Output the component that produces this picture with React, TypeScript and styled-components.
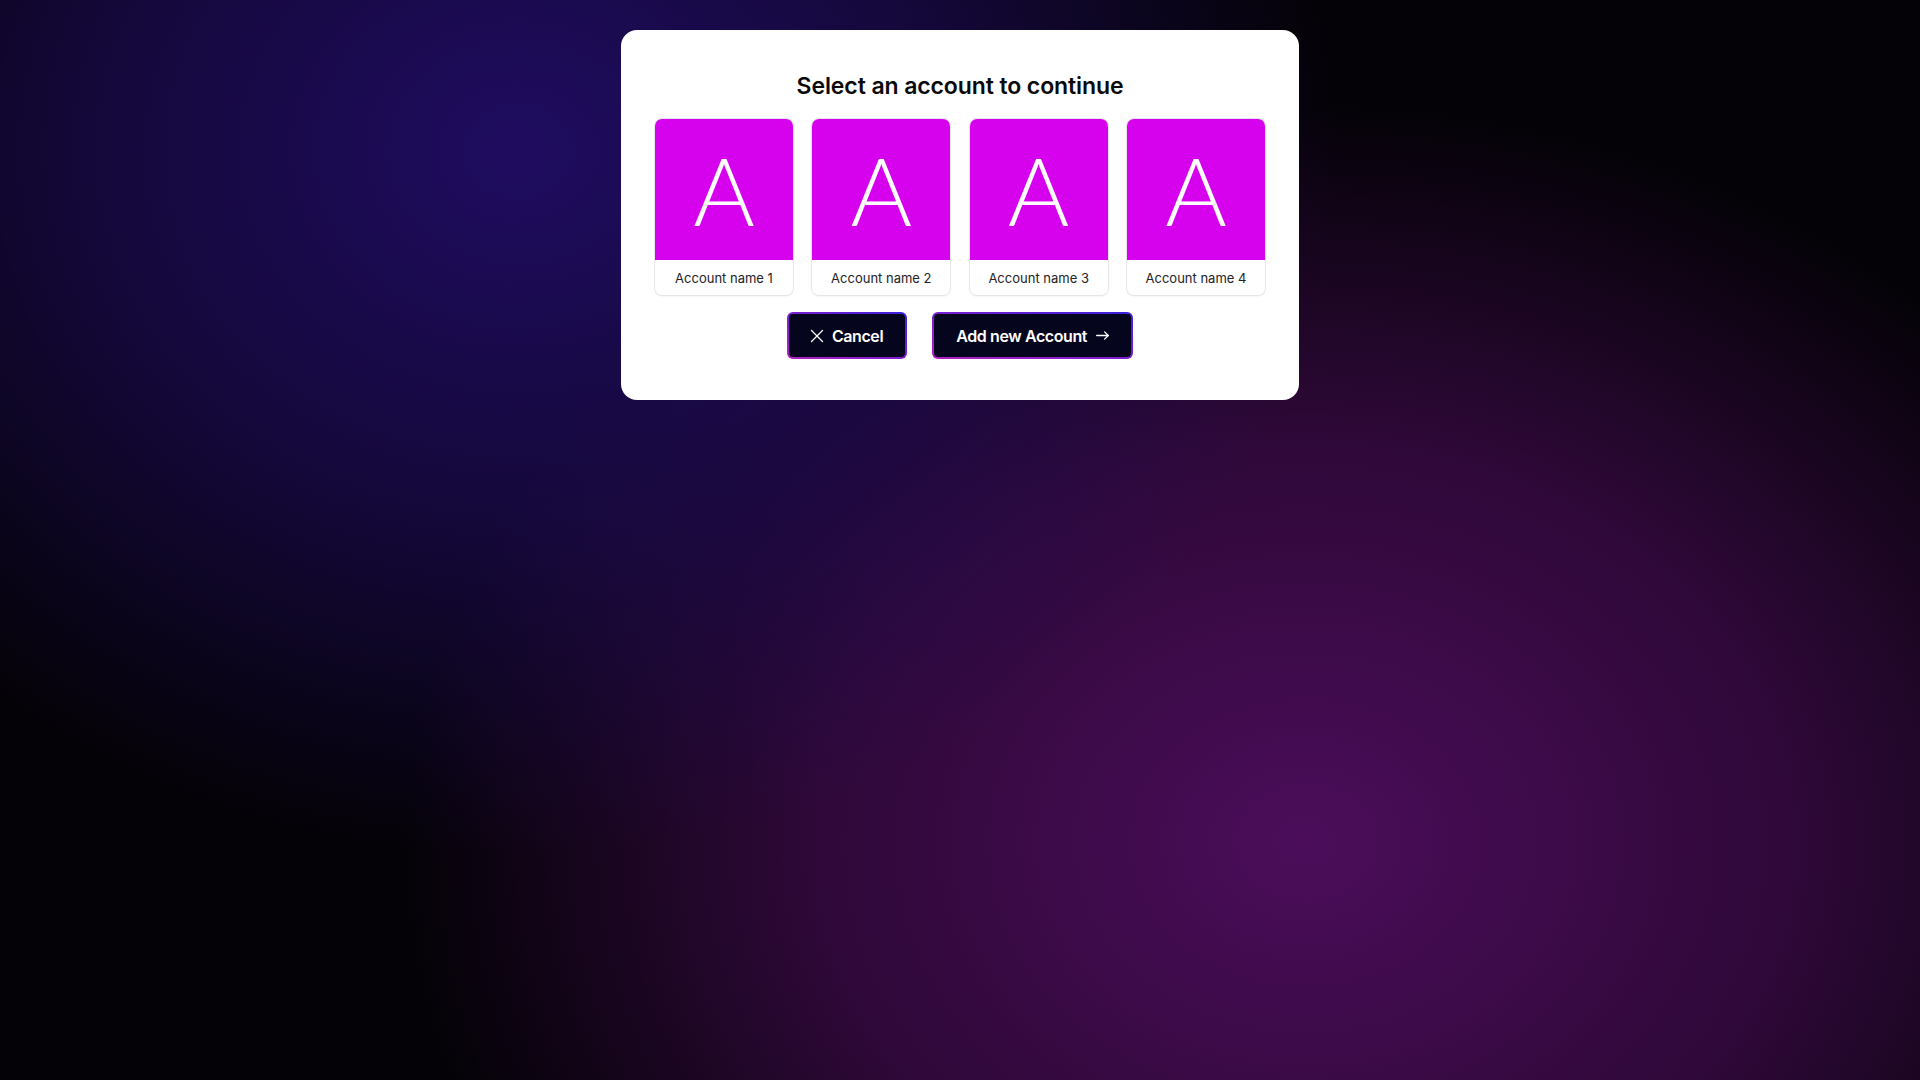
import React from "react";
import styled, { createGlobalStyle } from "styled-components";
import { X } from "lucide-react";

const GlobalStyle = createGlobalStyle`
  html, body {
    margin: 0;
    padding: 0;
    height: 100%;
  }
  body {
    font-family: "Inter", "Liberation Sans", sans-serif;
    background: #050208;
  }
  #root {
    min-height: 100vh;
  }
`;

const Page = styled.div`
  min-height: 100vh;
  box-sizing: border-box;
  padding-top: 30px;
  display: flex;
  justify-content: center;
  align-items: flex-start;
  background:
    radial-gradient(ellipse 1000px 860px at 27% 14%, #1f0c60 0%, rgba(30, 11, 88, 0.6) 45%, rgba(30, 11, 88, 0) 82%),
    radial-gradient(ellipse 1100px 900px at 68% 78%, #4b0d5a 0%, rgba(72, 12, 86, 0.62) 45%, rgba(72, 12, 86, 0) 82%),
    #040207;
`;

const Modal = styled.div`
  width: 678px;
  box-sizing: border-box;
  background: #ffffff;
  border-radius: 16px;
  padding: 40px 33px 41px;
  display: flex;
  flex-direction: column;
  align-items: center;
`;

const Title = styled.h1`
  margin: 0 0 16px;
  font-family: "Inter", "Liberation Sans", sans-serif;
  font-size: 23px;
  line-height: 32px;
  font-weight: 600;
  letter-spacing: -0.1px;
  color: #0a0a0a;
`;

const CardRow = styled.div`
  width: 100%;
  display: flex;
  justify-content: space-between;
`;

const Card = styled.div`
  width: 140px;
  border: 1px solid #e6e6ea;
  border-radius: 8px;
  overflow: hidden;
  background: #ffffff;
  box-sizing: border-box;
  display: flex;
  flex-direction: column;
  box-shadow: 0 1px 2px rgba(0, 0, 0, 0.04);
`;

const Avatar = styled.div`
  height: 140px;
  margin: -1px -1px 0;
  background: #d702ed;
  color: #ffffff;
  display: flex;
  align-items: center;
  justify-content: center;
  font-family: "Lato", "Inter", sans-serif;
  font-weight: 300;
  font-size: 94px;
  line-height: 1;
  padding-top: 2px;
`;

const Label = styled.div`
  height: 35px;
  display: flex;
  align-items: center;
  justify-content: center;
  font-family: "Inter", "Liberation Sans", sans-serif;
  font-size: 13px;
  color: #222226;
`;

const Actions = styled.div`
  margin-top: 16px;
  display: flex;
  gap: 25px;
  justify-content: center;
`;

const Button = styled.button<{ $gap: number }>`
  height: 47px;
  box-sizing: border-box;
  padding: 0 22px;
  border: 2px solid transparent;
  border-radius: 6px;
  background:
    linear-gradient(#05051d, #05051d) padding-box,
    linear-gradient(to top right, #b61ec6 0%, #7a1fd0 50%, #3a1fdc 100%) border-box;
  color: #ffffff;
  font-family: "Inter", "Liberation Sans", sans-serif;
  font-size: 16px;
  font-weight: 600;
  letter-spacing: -0.4px;
  display: flex;
  align-items: center;
  gap: ${(p) => p.$gap}px;
  cursor: pointer;
`;

const CancelIcon = styled(X)`
  margin-left: -5px;
  flex: none;
`;

const ArrowSvg = styled.svg`
  flex: none;
  width: 13px;
  height: 9px;
`;

function NextArrow() {
  return (
    <ArrowSvg viewBox="0 0 13 9" fill="none" stroke="currentColor" strokeWidth={1.3} strokeLinecap="round" strokeLinejoin="round">
      <path d="M0.7 4.5H12.2" />
      <path d="M8.6 0.9L12.2 4.5L8.6 8.1" />
    </ArrowSvg>
  );
}

const accounts = ["Account name 1", "Account name 2", "Account name 3", "Account name 4"];

export default function App() {
  return (
    <>
      <GlobalStyle />
      <Page>
        <Modal>
          <Title>Select an account to continue</Title>
          <CardRow>
            {accounts.map((name) => (
              <Card key={name}>
                <Avatar>A</Avatar>
                <Label>{name}</Label>
              </Card>
            ))}
          </CardRow>
          <Actions>
            <Button $gap={4}>
              <CancelIcon size={22} strokeWidth={1.4} />
              Cancel
            </Button>
            <Button $gap={9}>
              Add new Account
              <NextArrow />
            </Button>
          </Actions>
        </Modal>
      </Page>
    </>
  );
}
